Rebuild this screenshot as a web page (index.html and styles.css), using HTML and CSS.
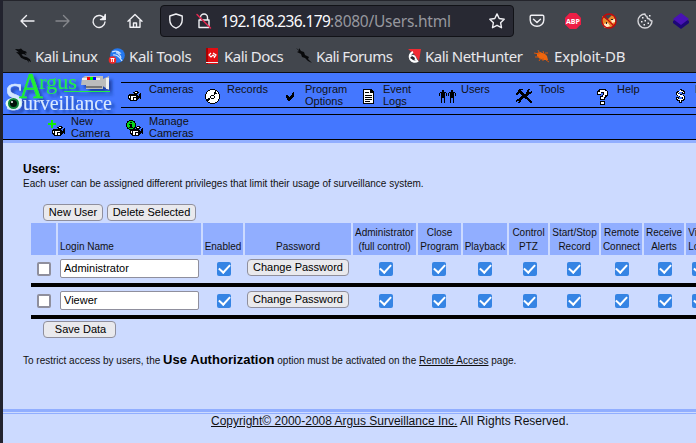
FILE: index.html
```html
<!DOCTYPE html>
<html lang="en">
<head>
<meta charset="utf-8">
<title>Argus Surveillance - Users</title>
<link rel="stylesheet" href="styles.css">
</head>
<body>
<svg class="defs" aria-hidden="true">
  <defs>
    <symbol id="camera" viewBox="0 0 13 10">
      <path d="M6 1h1V0h3v1h1v1h-1v1H6V2H5V1zM0 4h1V3h8v1h1v1h1V3h1V2h1v6h-1V7h-1v1h-1v1H9v1H2V9H1V8H0z" fill="#000"/>
      <path d="M1 5h1v2H1zM3 5h2v4H3zM5 5h3v1H5zM6 7h2v2H6zM7 1h2v1H7z" fill="#fff"/>
    </symbol>
    <symbol id="dragon" viewBox="0 0 16 16">
      <path d="M0 1l4 .3 2-.8 2 2 3 1 1 2-2-.7 1.500 2.400-3-1.300-2 .3 1.500 2 4 1 3 2 1 3-3-2-3-.5-4-2-2-3L1 4l3 .3L1 2z" fill="currentColor"/>
      <path d="M8 9l5 2 1 4-2-3-4-2z" fill="currentColor"/>
    </symbol>
  </defs>
</svg>
<div class="window">
  <header class="chrome">
    <div class="toolbar">
      <svg class="tool back" viewBox="0 0 16 16"><path d="M15 8H2M7.500 2.500 2 8l5.500 5.500"/></svg>
      <svg class="tool forward" viewBox="0 0 16 16"><path d="M1 8h13M8.500 2.500 14 8l-5.500 5.500"/></svg>
      <svg class="tool reload" viewBox="0 0 16 16"><path d="M13.500 6A6 6 0 1 0 14 9M14.200 1.500v5H9.500"/><path class="solid" d="M14.800 1v6H9z"/></svg>
      <svg class="tool home" viewBox="0 0 16 16"><path d="M1 8.200 8 1.500l7 6.700M3 7v7.300h10V7M6.500 14V10h3v4"/></svg>
      <div class="urlbar">
        <svg class="tool shield" viewBox="0 0 16 16"><path d="M8 1 14.200 3v4c0 4-2.700 6.800-6.200 8.200C4.500 13.800 1.800 11 1.800 7V3z"/></svg>
        <svg class="tool lock" viewBox="0 0 16 16"><path d="M4.500 7V4.500a3.500 3.500 0 0 1 7 0V7M3 7h10v7.500H3z"/><path class="slash" d="M1 1.500 14.500 15"/></svg>
        <span class="url"><b>192.168.236.179</b>:8080/Users.html</span>
        <svg class="tool star" viewBox="0 0 16 16"><path d="m8 .9 2.200 4.600 5 .7-3.600 3.500.9 5L8 12.300l-4.500 2.400.9-5L.8 6.200l5-.7z"/></svg>
      </div>
      <div class="extensions">
        <svg class="tool" viewBox="0 0 16 16"><path d="M2.500 2.200h11q1.300 0 1.300 1.300V7a6.800 6.300 0 0 1-13.600 0V3.500q0-1.300 1.300-1.300zM4.500 6.300 8 9.500l3.500-3.200"/></svg>
        <svg class="ext" viewBox="0 0 16 16"><path d="M4.700 0h6.600L16 4.700v6.600L11.300 16H4.700L0 11.300V4.700z" fill="#ed1e45"/><text class="abp" x="8" y="10.700" textLength="14" lengthAdjust="spacingAndGlyphs">ABP</text></svg>
        <svg class="ext" viewBox="0 0 16 16"><path d="M1 3l5 4 5-5 2 1 1 4 1 3-5 4-6 1-3-4z" fill="#e88a2b"/><path d="M2 11l5-1 2 3-5 2zM10 7l4-1v3l-3 1z" fill="#ffe8c2"/><path d="M5 9h1v2H5zM10 6h2v1h-2z" fill="#222"/><circle cx="8" cy="8" r="7" fill="none" stroke="#c70808" stroke-width="1.300"/><path d="M3 3l10 10" stroke="#c70808" stroke-width="1.300"/></svg>
        <svg class="tool cookie" viewBox="0 0 16 16"><path d="M8 1a7 7 0 1 0 7 7q-2 0-2.500-2Q10 6 10 3.500 8 3 8 1z"/><path class="solid" d="M5 4h1.500v1.500H5zM7.500 7H9v1.500H7.500zM4 8h1.500v1.500H4zM6.500 11H8v1.500H6.500zM10.500 9.500H12V11h-1.500zM12 2h1.500v1.500H12z"/></svg>
        <svg class="ext" viewBox="0 0 16 16"><path d="M0 8l8-5 8 5v2l-8 6-8-6z" fill="#1d0777"/><path d="M8 0l8 6-8 6-8-6z" fill="#4912b5"/></svg>
      </div>
    </div>
    <nav class="bookmarks">
      <a class="bm bm-linux"><svg class="fav"><use href="#dragon"/></svg><span>Kali Linux</span></a>
      <a class="bm bm-tools"><svg class="fav" viewBox="0 0 16 16"><circle cx="8.500" cy="7.500" r="7.300" fill="#2478ef"/><path d="M3 4q5-2 8 1l-4-.2q4 1.200 5 5M4 7q5-1 9 6" fill="none" stroke="#c9e1ff" stroke-width="1.200"/><circle cx="3.500" cy="12" r="3.800" fill="#ef2929"/><path d="M1.500 10.500h4M2.700 10.500v3.500M4.500 10.500v3.500" stroke="#fff"/></svg><span>Kali Tools</span></a>
      <a class="bm bm-docs"><svg class="fav" viewBox="0 0 16 16"><path d="M2 0h12v16H2z" fill="#e30d13"/><path d="M2 0h2v16H2z" fill="#a80000"/><path d="M2 14h12v1H2z" fill="#eee"/><path d="M7 5 5 7l2 2 2-2 2 2M9 5l3 2-2 3" fill="none" stroke="#fff" stroke-width="1.200"/></svg><span>Kali Docs</span></a>
      <a class="bm bm-forums"><svg class="fav" viewBox="0 0 16 16"><path d="M0 0l3 2V0l2 3 3 1 1 3 4 2-1 2 4 4-4-2-3-3-3-1-1-3-4-2 2-1z" fill="#08090b"/></svg><span>Kali Forums</span></a>
      <a class="bm bm-hunter"><svg class="fav" viewBox="0 0 16 16"><path d="M3 1h13l-2 12-5-7z" fill="#f12b32"/><path d="M13 12.500A5 5 0 1 1 8 4M5 10q4-5 6 2" fill="none" stroke="#fff" stroke-width="2.300"/><path d="M5 10l2-2 3 2-1 2" fill="#23262b"/></svg><span>Kali NetHunter</span></a>
      <a class="bm bm-exploit"><svg class="fav" viewBox="0 0 16 16"><path d="M3 5l3-1 5 2 2 2 1 4-4 0-4-1-3-3z" fill="#ef660d"/><path d="M4 2l2 4M0 5l5 1M1 9h4M5 13l2-3M12 12l3 2M9 3l1 3M11 5l3 0M9 13l0-3" stroke="#d8560c" fill="none"/></svg><span>Exploit-DB</span></a>
    </nav>
  </header>

  <div class="site-head">
    <svg class="logo" viewBox="0 0 118 41">
      <defs><filter id="shadow" x="-10%" y="-10%" width="125%" height="135%"><feDropShadow dx="3" dy="3" stdDeviation="1.500" flood-color="#12338c" flood-opacity=".75"/></filter></defs>
      <g filter="url(#shadow)">
        <text class="logo-s" x="2" y="37" textLength="19" lengthAdjust="spacingAndGlyphs">S</text>
        <text class="logo-a" x="16" y="25" textLength="24" lengthAdjust="spacingAndGlyphs">A</text>
        <text class="logo-rgus" x="36" y="16" textLength="38" lengthAdjust="spacingAndGlyphs">rgus</text>
        <path d="M61 18.500h46" stroke="#20ef45"/>
        <text class="logo-rest" x="20" y="37" textLength="89" lengthAdjust="spacingAndGlyphs">urveillance</text>
        <path d="M79 5l3-2h18v3l6-3v14l-6-4v3H83v-4h-5z" fill="#bcbcbc"/>
        <path d="M79 5h18v2H79zM103 5h3v11h-3z" fill="#eee"/>
        <path d="M84 4h3v3h-3z" fill="#f00"/><path d="M87 4h3v3h-3z" fill="#0f0"/><path d="M90 4h3v3h-3z" fill="#00f"/>
        <path d="M83 13h16v2H83z" fill="#777"/>
      </g>
      <ellipse cx="10.500" cy="30.500" rx="8" ry="5.800" fill="#e4fff0"/>
      <circle cx="10.500" cy="30.500" r="5.500" fill="#11853d"/><circle cx="10.500" cy="30.500" r="3.500" fill="#001109"/><circle cx="9" cy="29" r="1" fill="#fff"/>
    </svg>
    <nav class="main-nav">
      <a class="item"><svg class="ico i-cam"><use href="#camera"/></svg><span>Cameras</span></a>
      <a class="item"><svg class="ico i-disc" viewBox="0 0 15 15"><path d="M5 0h5v1h2v1h1v1h1v2h1v5h-1v2h-1v1h-1v1h-2v1H5v-1H3v-1H2v-1H1v-2H0V5h1V3h1V2h1V1h2z" fill="#000"/><path d="M5 1h5v1h2v1h1v2h1v5h-1v2h-1v1h-2v1H5v-1H3v-1H2v-2H1V5h1V3h1V2h2z" fill="#fff"/><path d="M9 3h1V2h1v2h1v1h-2v1H9zM2 10h1V9h2v2H4v1H2zM6 6h3v1h1v2H9v1H6V9H5V7h1z" fill="#000"/><path d="M6 7h3v2H6z" fill="#fff"/></svg><span>Records</span></a>
      <a class="item"><svg class="ico i-check" viewBox="0 0 8 9"><path d="M0 3h2v1h1v1h1V4h1V3h1V1h1V0h1v5H7v1H6v1H5v1H4v1H2V8H1V6H0z"/></svg><span>Program Options</span></a>
      <a class="item"><svg class="ico i-doc" viewBox="0 0 11 15"><path d="M0 0h9v1h1v1h1v13H0z"/><path d="M1 1h6v3h3v10H1z" fill="#fff"/><path d="M2 3h4v1H2zM2 6h7v1H2zM2 8h7v1H2zM2 10h7v1H2zM2 12h5v1H2z"/></svg><span>Event Logs</span></a>
      <a class="item"><svg class="ico i-users" viewBox="0 0 16 13"><path id="man" d="M3 0h2v2H3zM1 2h6v1H1zM0 3h1v3H0zM2 3h4v4H2zM7 3h1v3H7zM2 7h1v6H2zM5 7h1v6H5zM3 7h2v1H3z"/><use href="#man" x="9"/></svg><span>Users</span></a>
      <a class="item"><svg class="ico i-tools" viewBox="0 0 16 15"><path d="M3 0h4v1H5v1h1v1h1v1h1v1h2V3h1V1h1V0h2v1h-1v2h2V2h1v2h-1v1h-2v1h-1v1h-1v1h1v1h1v1h1v1h1v1h1v2h-2v-1h-1v-1h-1v-1h-1v-1H9V9H7v1H6v1H5v2H4v1H2v-1h1v-1H1v1H0v-2h1v-1h2V9h1V8h1V7h1V6H5V5H4V4H3v1H2v1H0V4h1V3h1V1h1z"/></svg><span>Tools</span></a>
      <a class="item"><svg class="ico i-help" viewBox="0 0 11 16"><path d="M2 0h7v1h1v1h1v5h-1v1H9v1H8v2H3V7h2V6h1V4H4v2H0V2h1V1h1z"/><path d="M3 1h5v1h2v4H8v2H7v2H4V8h2V6h1V3H4v2H1V3h2z" fill="#fff"/><path d="M3 12h5v4H3z"/><path d="M4 13h3v2H4z" fill="#fff"/></svg><span>Help</span></a>
      <a class="item"><svg class="ico i-money" viewBox="0 0 9 14"><path d="M4 0h2v1h2v1h1v3H6V3H3v2h3v1h2v1h1v4H8v1H6v2H3v-2H1v-1H0V8h3v2h3V8H3V7H1V6H0V3h1V2h3z"/><path d="M4 1h1v1h2v1h1v1H7V3H3v1H2v1h2v1h3v1h1v3H7v1H5v2H4v-2H2v-1H1V9h1v1h5V8H4V7H2V6H1V4h1V3h1V2h1z" fill="#fff"/></svg><span>Register</span></a>
    </nav>
  </div>
  <nav class="sub-nav">
    <a class="item"><svg class="ico i-new" viewBox="0 0 17 16"><path d="M3 0h2v3h3v2H5v3H3V5H0V3h3z" fill="#0ff000"/><use href="#camera" x="4" y="6" width="13" height="10"/></svg><span>New Camera</span></a>
    <a class="item"><svg class="ico i-manage" viewBox="0 0 17 16"><use href="#camera" x="4" y="6" width="13" height="10"/><path d="M3 0h4v1h2v2h1v4H9v2H7v1H3V9H1V7H0V3h1V1h2z"/><path d="M3 1h4v1h1v1h1v4H8v1H7v1H3V8H2V7H1V3h1V2h1z" fill="#08d519"/><path d="M4 2h2v1H4zM3 4h3v3h1v1H3V7h1V5H3z"/></svg><span>Manage Cameras</span></a>
  </nav>

  <main>
    <h1>Users:</h1>
    <p class="intro">Each user can be assigned different privileges that limit their usage of surveillance system.</p>
    <div class="actions"><button class="new">New User</button><button class="delete">Delete Selected</button></div>
    <div class="grid">
      <div class="row head">
        <div></div><div class="left">Login Name</div><div>Enabled</div><div>Password</div><div>Administrator<br>(full control)</div><div>Close<br>Program</div><div>Playback</div><div>Control<br>PTZ</div><div>Start/Stop<br>Record</div><div>Remote<br>Connect</div><div>Receive<br>Alerts</div><div>View<br>Logs</div>
      </div>
      <div class="row user">
        <i class="box"></i><input value="Administrator"><i class="box on nudge"></i><button class="change">Change Password</button><i class="box on nudge"></i><i class="box on back-half"></i><i class="box on"></i><i class="box on nudge"></i><i class="box on back-half"></i><i class="box on"></i><i class="box on nudge"></i><i class="box on"></i>
      </div>
      <div class="row user">
        <i class="box"></i><input value="Viewer"><i class="box on nudge"></i><button class="change">Change Password</button><i class="box on nudge"></i><i class="box on back-half"></i><i class="box on"></i><i class="box on nudge"></i><i class="box on back-half"></i><i class="box on"></i><i class="box on nudge"></i><i class="box on"></i>
      </div>
    </div>
    <div class="save-row"><button class="save">Save Data</button></div>
    <p class="note">To restrict access by users, the <b>Use Authorization</b> option must be activated on the <a>Remote Access</a> page.</p>
  </main>
  <footer><div class="legal"><a>Copyright© 2000-2008 Argus Surveillance Inc.</a> All Rights Reserved.</div></footer>
</div>
</body>
</html>
```
FILE: styles.css
```css
* { box-sizing: border-box; }
html, body { margin: 0; height: 100%; overflow: hidden; }
body {
  background: #22232e;
  font-family: "Liberation Sans", Arial, sans-serif;
  color: #111;
}
.defs { position: absolute; width: 0; height: 0; }
svg { display: block; flex: none; overflow: visible; }
.window { width: 693px; height: 443px; margin-left: 3px; overflow: hidden; display: flex; flex-direction: column; background: #ccdaff; }

/* browser chrome */
.chrome { flex: none; height: 73px; background: #42464d; border-top: 1px solid #24252c; border-bottom: 1px solid #0d0d10; font-family: "Noto Sans", sans-serif; color: #fbfbfe; }
.toolbar { display: flex; align-items: center; height: 40px; padding-left: 16px; }
.tool { width: 16px; height: 16px; fill: none; stroke: #f0f0f4; stroke-width: 1.4; stroke-linejoin: round; stroke-linecap: round; }
.tool .solid { fill: #f0f0f4; stroke: none; }
.tool .slash { stroke: #e22850; stroke-width: 1.5; }
.forward { margin-left: 20px; stroke: #85878c; }
.reload { margin-left: 20px; }
.home { margin-left: 20px; }
.urlbar { display: flex; align-items: center; width: 354px; height: 32px; margin-left: 17px; padding: 0 8px 0 7px; background: #282933; border: 1px solid #111217; border-radius: 4px; }
.lock { margin-left: 12px; }
.url { margin-left: 9px; font-size: 15.5px; line-height: 22px; letter-spacing: -.25px; color: #96979e; white-space: nowrap; }
.url b { font-weight: 400; letter-spacing: -.65px; color: #fbfbfe; }
.star { margin-left: auto; }
.extensions { display: flex; margin-left: 15px; gap: 20px; }
.cookie { stroke: #d6d6da; }
.ext { width: 16px; height: 16px; }
.abp { font: 700 7px "Open Sans", sans-serif; fill: #fff; text-anchor: middle; }
.bookmarks { display: flex; height: 29px; align-items: center; padding-left: 12px; font-size: 15px; white-space: nowrap; }
.bm { display: flex; align-items: center; gap: 4px; height: 22px; color: #e8e8ec; }
.fav { width: 16px; height: 16px; color: #08090b; }
.bm-linux { width: 94px; letter-spacing: -.5px; }
.bm-tools { width: 95px; letter-spacing: -.35px; }
.bm-docs { width: 92px; letter-spacing: -.5px; }
.bm-forums { width: 109px; letter-spacing: -.6px; }
.bm-hunter { width: 129px; letter-spacing: -.5px; }
.bm-exploit { letter-spacing: -.2px; }

/* site navigation */
.site-head { flex: none; display: flex; height: 42px; background: #4477ff; border-bottom: 1px solid #000; }
.logo { width: 118px; height: 41px; font-family: "Liberation Serif", serif; }
.logo-a { font-size: 35px; fill: #20ef30; stroke: #20ef30; stroke-width: .5; }
.logo-rgus { font-size: 22px; fill: #20ef45; }
.logo-s { font-size: 40px; fill: #d3e6ff; stroke: #d3e6ff; stroke-width: .6; }
.logo-rest { font-size: 21px; fill: #d9eaff; }
.main-nav { flex: none; display: flex; width: 640px; height: 26px; margin-top: 9px; border-top: 1px solid #000; border-bottom: 1px solid #000; }
.item { flex: none; display: flex; width: 78px; font-size: 11px; line-height: 12px; }
.item .ico { shape-rendering: crispEdges; }
.item span { display: block; width: 50px; margin-left: auto; }
.sub-nav { flex: none; display: flex; height: 28px; padding-left: 40px; background: #4477ff; border-bottom: 3px solid #91aeff; box-shadow: inset 0 -1px #000; }
.i-cam { width: 13px; height: 10px; margin: 8px 0 0 7px; }
.i-disc { width: 15px; height: 15px; margin: 6px 0 0 6px; }
.i-check { width: 8px; height: 9px; margin: 9px 0 0 9px; }
.i-doc { width: 11px; height: 15px; margin: 6px 0 0 8px; }
.i-users { width: 16px; height: 13px; margin: 7px 0 0 6px; }
.i-tools { width: 16px; height: 15px; margin: 6px 0 0 5px; }
.i-help { width: 11px; height: 16px; margin: 6px 0 0 8px; }
.i-money { width: 9px; height: 14px; margin: 6px 0 0 9px; }
.i-new, .i-manage { width: 17px; height: 16px; margin: 5px 0 0 5px; }

/* users page */
main { flex: none; height: 266px; padding-left: 20px; }
h1 { margin: 0; padding-top: 19px; font-size: 12px; line-height: 14px; color: #000; }
p { margin: 0; white-space: nowrap; font-size: 10px; }
.intro { line-height: 14px; padding-top: 1px; }
button { height: 17px; padding: 0; border: 1px solid #8f8f9d; border-radius: 4px; background: #e9e9ed; font: 11px/15px "Liberation Sans", sans-serif; color: #000; white-space: nowrap; }
.actions { display: flex; gap: 4px; padding: 13px 0 2px 20px; }
.new { width: 60px; }
.delete { width: 89px; }
.grid { width: 681px; margin-left: 8px; }
.row { display: grid; grid-template-columns: 25px 143px 40px 106px 63px 43px 44px 39px 49px 41px 40px 26px; column-gap: 2px; }
.head { height: 32px; font-size: 10px; line-height: 14px; text-align: center; white-space: nowrap; }
.head div { display: flex; align-items: flex-end; justify-content: center; padding-bottom: 1px; background: #91aeff; }
.head .left { justify-content: flex-start; padding-left: 2px; }
.user { height: 32px; border-bottom: 4px solid #000; align-items: center; justify-items: center; }
.box { width: 14px; height: 14px; border: 2px solid #8f8f9d; border-radius: 2px; background: #fff; }
.on { border: 0; background: #3584e4; display: grid; place-items: center; }
.on::after { content: ""; width: 9px; height: 5px; margin-bottom: 3px; border-left: 2px solid #fff; border-bottom: 2px solid #fff; transform: rotate(-47deg); }
.nudge { margin-left: 2px; }
.back-half { margin-right: 1px; }
input { width: 139px; height: 19px; margin-bottom: 1px; padding: 0 3px 1px; border: 1px solid #8f8f9d; border-radius: 2px; background: #fff; font: 11px/16px "Liberation Sans", sans-serif; color: #000; }
.change { width: 102px; margin-bottom: 3px; }
.save-row { padding: 2px 0 0 20px; display: flex; }
.save { width: 73px; padding-left: 2px; }
.note { padding-top: 14px; line-height: 16px; }
.note b { font-size: 13px; letter-spacing: .04px; color: #000; }
a { color: inherit; }
.note a, .legal a { text-decoration: underline; }
footer { flex: 1; border-top: 3px solid #91aeff; padding-top: 1px; }
.legal { border-top: 1px solid #91aeff; padding-left: 208px; font-size: 12px; line-height: 14px; white-space: nowrap; }
```
